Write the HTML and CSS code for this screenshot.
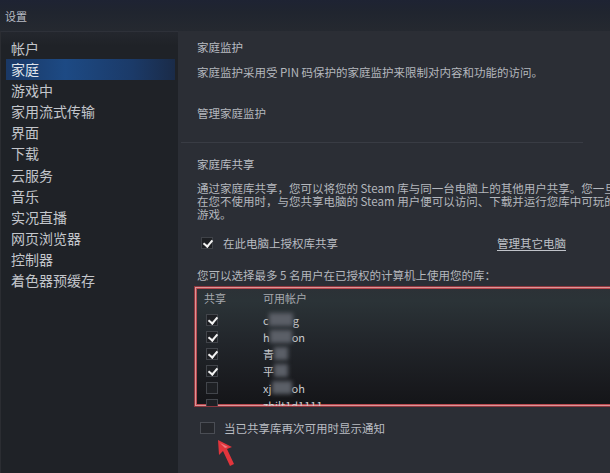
FILE: index.html
```html
<!DOCTYPE html>
<html lang="zh-CN">
<head>
<meta charset="utf-8">
<title>设置</title>
<link rel="stylesheet" href="styles.css">
</head>
<body>
<div class="window">
  <header class="titlebar">设置</header>
  <div class="layout">
    <nav class="sidebar">
      <div class="nav-item">帐户</div>
      <div class="nav-item active">家庭</div>
      <div class="nav-item">游戏中</div>
      <div class="nav-item">家用流式传输</div>
      <div class="nav-item">界面</div>
      <div class="nav-item">下载</div>
      <div class="nav-item">云服务</div>
      <div class="nav-item">音乐</div>
      <div class="nav-item">实况直播</div>
      <div class="nav-item">网页浏览器</div>
      <div class="nav-item">控制器</div>
      <div class="nav-item">着色器预缓存</div>
    </nav>
    <main class="content">
      <h2 class="heading">家庭监护</h2>
      <p class="desc">家庭监护采用受 PIN 码保护的家庭监护来限制对内容和功能的访问。</p>
      <a class="plain-link">管理家庭监护</a>
      <div class="separator"></div>
      <h2 class="heading heading-2">家庭库共享</h2>
      <p class="para">通过家庭库共享，您可以将您的 Steam 库与同一台电脑上的其他用户共享。您一旦授权<br>在您不使用时，与您共享电脑的 Steam 用户便可以访问、下载并运行您库中可玩的<br>游戏。</p>
      <div class="check-row">
        <span class="box checked"></span>
        <span class="check-label">在此电脑上授权库共享</span>
        <a class="manage-link">管理其它电脑</a>
      </div>
      <p class="hint">您可以选择最多 5 名用户在已授权的计算机上使用您的库：</p>
      <div class="user-list">
        <div class="list-head"><span class="col-share">共享</span><span class="col-name">可用帐户</span></div>
        <div class="list-row"><span class="box small checked"></span><span class="name">c<i class="blur w24"></i>g</span></div>
        <div class="list-row"><span class="box small checked"></span><span class="name">h<i class="blur w22"></i>on</span></div>
        <div class="list-row"><span class="box small checked"></span><span class="name">青<i class="blur w14"></i></span></div>
        <div class="list-row"><span class="box small checked"></span><span class="name">平<i class="blur w14"></i></span></div>
        <div class="list-row"><span class="box small"></span><span class="name">xj<i class="blur w20"></i>oh</span></div>
        <div class="list-row"><span class="box small"></span><span class="name">zhilt1d1111</span></div>
      </div>
      <div class="check-row notify">
        <span class="box big"></span>
        <span class="check-label">当已共享库再次可用时显示通知</span>
      </div>
    </main>
  </div>
  <svg class="cursor" width="20" height="28" viewBox="0 0 20 28">
    <polygon points="1,1 15,8 10,10 17,25 13,27 6,12 2,16" fill="#e2353c"/>
    <polygon points="3,4 11,8 8,9" fill="#f07a7e"/>
  </svg>
</div>
</body>
</html>
```

FILE: styles.css
```css
* { box-sizing: border-box; }
html, body {
  margin: 0;
  padding: 0;
  background: #2a2d35;
  font-family: "Noto Sans CJK SC", "Noto Sans", "Liberation Sans", sans-serif;
}
body { overflow: hidden; }
.window {
  position: relative;
  width: 610px;
  height: 473px;
  overflow: hidden;
  background: #2a2d35;
}
.titlebar {
  height: 31px;
  padding: 9px 0 0 5px;
  font-size: 11px;
  line-height: 14px;
  color: #b9bdc6;
  background: linear-gradient(to bottom, #1e2333 0%, #20252f 40%, #252930 100%);
}
.layout {
  display: flex;
  width: 700px;
  height: 442px;
}
.sidebar {
  width: 178px;
  flex: none;
  padding: 6px 3px 0 5px;
  background: linear-gradient(to bottom, #24272e 0px, #1f2227 14px, #1f2227 100%);
  border-top: 1px solid #2e3139;
  border-left: 1px solid #2b2d32;
}
.nav-item {
  height: 21.1px;
  line-height: 21px;
  padding-left: 5px;
  font-size: 14px;
  color: #c3c6cb;
}
.nav-item.active {
  color: #dfe3ea;
  background: linear-gradient(to right, #1a3865 0%, #1d4a84 35%, #1b3a68 75%, #1a2b48 100%);
}
.content {
  flex: none;
  width: 500px;
  padding: 9px 0 0 19px;
  background: #2b2e35;
  color: #b4b7bd;
  font-size: 11.5px;
}
.heading {
  margin: 0;
  font-size: 11.5px;
  font-weight: normal;
  line-height: 14px;
  color: #b9bcc2;
}
.desc {
  margin: 11px 0 0;
  line-height: 14px;
  white-space: nowrap;
}
.plain-link {
  display: block;
  margin-top: 27px;
  line-height: 14px;
  color: #b4b7bd;
}
.separator {
  height: 1px;
  width: 402px;
  margin: 22px 0 0 -16px;
  background: #393c44;
}
.heading-2 { margin-top: 14px; }
.para {
  margin: 11px 0 0;
  line-height: 13px;
  white-space: nowrap;
}
.check-row {
  display: flex;
  align-items: center;
  height: 14px;
  margin-top: 15px;
  padding-left: 4px;
}
.check-label {
  margin-left: 10px;
  line-height: 14px;
  color: #b9bcc2;
}
.manage-link {
  margin-left: 159px;
  color: #bfc2c8;
  text-decoration: underline;
  text-underline-offset: 2px;
}
.box {
  position: relative;
  flex: none;
  width: 12px;
  height: 12px;
  background: #1d1f23;
  border: 1px solid #3f4248;
}
.box.checked::after {
  content: "";
  position: absolute;
  left: 3px;
  top: 0px;
  width: 4px;
  height: 7px;
  border: solid #f2f2f2;
  border-width: 0 2px 2px 0;
  transform: rotate(40deg);
}
.box.big {
  width: 15px;
  height: 12px;
  background: #26282d;
  border-color: #4a4d54;
}
.hint {
  margin: 18px 0 0;
  line-height: 14px;
  white-space: nowrap;
}
.user-list {
  margin: 4px 0 0 -3px;
  height: 121px;
  width: 470px;
  padding: 4px 0 0 9px;
  border: 1px solid #8e363e;
  border-right: 0;
  box-shadow: inset 1px 1px 0 #dc9597, inset 0 -1px 0 #dc9597, inset 2px 2px 0 #b9494f, inset 0 -2px 0 #b9494f;
  background: linear-gradient(to bottom, #2c3136 0%, #2b3337 12%, #22262b 45%, #18191d 85%, #141518 100%);
  overflow: hidden;
}
.list-head {
  display: flex;
  height: 14px;
  line-height: 14px;
  font-size: 11px;
  color: #a6a9ae;
}
.col-share { width: 59px; }
.list-row {
  display: flex;
  align-items: center;
  height: 17px;
  padding-left: 2px;
}
.list-head + .list-row { margin-top: 6px; }
.box.small {
  width: 12px;
  height: 12px;
  background: #1e2024;
  border-color: #42454b;
}
.name {
  display: flex;
  align-items: center;
  margin-left: 45px;
  font-size: 11px;
  color: #c9cbcf;
  line-height: 14px;
}
.blur {
  display: inline-block;
  height: 13px;
  background: #5b5f67;
  filter: blur(2px);
}
.w14 { width: 14px; }
.w20 { width: 20px; }
.w22 { width: 22px; }
.w24 { width: 24px; }
.notify {
  margin-top: 14px;
  padding-left: 3px;
}
.notify .check-label { margin-left: 9px; }
.cursor {
  position: absolute;
  left: 217px;
  top: 439px;
}
```
